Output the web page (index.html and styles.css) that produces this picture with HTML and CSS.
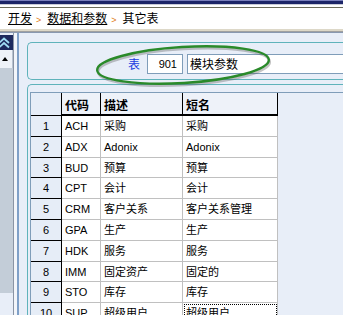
FILE: index.html
```html
<!DOCTYPE html>
<html lang="zh-CN">
<head>
  <meta charset="UTF-8">
  <title>其它表</title>
  <link rel="stylesheet" href="styles.css">
</head>
<body>
  <div class="titlebar"></div>
  <div class="crumbs">
    <a class="crumb">开发</a><span class="sep">&gt;</span><a class="crumb">数据和参数</a><span class="sep">&gt;</span><span class="here">其它表</span>
  </div>
  <div class="rule"></div>
  <div class="main">
    <div class="sidebar">
      <div class="nav-head">
        <svg width="13" height="15" viewBox="0 0 13 15">
          <path d="M-1 8 L4 3.5 L9 8" fill="none" stroke="#9fdcf4" stroke-width="1.8"/>
          <path d="M-1 12.5 L4 8 L9 12.5" fill="none" stroke="#9fdcf4" stroke-width="1.8"/>
        </svg>
      </div>
      <div class="scroll-up"><span class="tri"></span></div>
      <div class="track"></div>
    </div>
    <div class="splitter"></div>
    <div class="content">
      <div class="panel head-panel">
        <span class="lbl">表</span>
        <span class="field num">901</span>
        <span class="field desc">模块参数</span>
        <svg class="ring" width="230" height="54" viewBox="0 0 230 54">
          <ellipse cx="96" cy="30" rx="86" ry="18" transform="rotate(-3.5 96 30)" fill="none" stroke="rgba(90,90,90,0.35)" stroke-width="2.5"/>
          <ellipse cx="95" cy="28" rx="86" ry="18" transform="rotate(-3.5 95 28)" fill="none" stroke="#2a8a2a" stroke-width="2.4"/>
        </svg>
      </div>
      <div class="panel grid-panel">
        <div class="grid">
          <div class="hd rn"></div><div class="hd">代码</div><div class="hd">描述</div><div class="hd">短名</div>

          <div class="rn">1</div><div class="cell">ACH</div><div class="cell">采购</div><div class="cell">采购</div>
          <div class="rn">2</div><div class="cell">ADX</div><div class="cell">Adonix</div><div class="cell">Adonix</div>
          <div class="rn">3</div><div class="cell">BUD</div><div class="cell">预算</div><div class="cell">预算</div>
          <div class="rn">4</div><div class="cell">CPT</div><div class="cell">会计</div><div class="cell">会计</div>
          <div class="rn">5</div><div class="cell">CRM</div><div class="cell">客户关系</div><div class="cell">客户关系管理</div>
          <div class="rn">6</div><div class="cell">GPA</div><div class="cell">生产</div><div class="cell">生产</div>
          <div class="rn">7</div><div class="cell">HDK</div><div class="cell">服务</div><div class="cell">服务</div>
          <div class="rn">8</div><div class="cell">IMM</div><div class="cell">固定资产</div><div class="cell">固定的</div>
          <div class="rn">9</div><div class="cell">STO</div><div class="cell">库存</div><div class="cell">库存</div>
          <div class="rn">10</div><div class="cell">SUP</div><div class="cell">超级用户</div><div class="cell focus">超级用户</div>
        </div>
      </div>
    </div>
  </div>
</body>
</html>
```

FILE: styles.css
```css
body {
  margin: 0;
  width: 343px;
  height: 315px;
  overflow: hidden;
  background: #e8eef8;
  font-family: "Liberation Sans", "Noto Sans CJK SC", sans-serif;
  font-size: 11px;
  color: #000;
}
.titlebar {
  height: 4px;
  background: #1c2568;
  border-top: 1px solid #7a80bc;
  box-sizing: border-box;
}
.crumbs {
  height: 25px;
  box-sizing: border-box;
  background: #fff;
  border-top: 1px solid #c8ccd8;
  padding: 2px 0 0 8px;
  box-shadow: inset 0 2px 0 #fff, inset 0 3px 0 #6b6b5a;
  font-family: "Noto Sans CJK SC", sans-serif;
  font-size: 12px;
  line-height: 22px;
}
.crumb {
  text-decoration: underline;
  color: #000;
}
.sep {
  color: #e07a10;
  font-family: "Liberation Sans", sans-serif;
  font-size: 9px;
  margin: 0 6px 0 4px;
}
.rule {
  height: 4px;
  box-sizing: border-box;
  border-top: 2px solid #ddd8c8;
  border-bottom: 1px solid #8898b0;
  background: #a0a0a0;
}
.main {
  display: flex;
  height: 282px;
}
.sidebar {
  width: 14px;
  flex: none;
  display: flex;
  flex-direction: column;
  padding-top: 2px;
  border-right: 1px solid #8a94a4;
  box-sizing: border-box;
}
.nav-head {
  height: 15px;
  background: #1e2a5e;
  overflow: hidden;
}
.nav-head svg {
  display: block;
}
.scroll-up {
  height: 18px;
  background: #eef2f8;
  border-right: 1px solid #b8c2d0;
  display: flex;
  justify-content: center;
  align-items: center;
}
.tri {
  width: 0;
  height: 0;
  border-left: 3px solid transparent;
  border-right: 3px solid transparent;
  border-bottom: 4px solid #000;
  margin-left: -2px;
}
.track {
  height: 225px;
  background: #c3cdd8;
}
.splitter {
  width: 3px;
  flex: none;
  background: #f2f5fa;
}
.content {
  flex: 1;
  border-left: 2px solid #7fa0c8;
  padding: 9px 0 0 8px;
  min-width: 0;
}
.panel {
  border: 1px solid #5fb3bb;
  border-right: none;
  border-radius: 5px 0 0 5px;
  margin-right: -20px;
}
.head-panel {
  position: relative;
  height: 38px;
  box-sizing: border-box;
  display: flex;
  align-items: flex-start;
  padding: 11px 0 0 100px;
  font-family: "Noto Sans CJK SC", sans-serif;
  font-size: 12px;
}
.lbl {
  color: #1a3ce0;
  line-height: 20px;
  margin-right: 7px;
}
.field {
  height: 20px;
  box-sizing: border-box;
  border: 1px solid #7f9db9;
  background: #fff;
  line-height: 18px;
}
.num {
  width: 40px;
  text-align: right;
  padding-right: 5px;
  margin-right: 4px;
  font-family: "Liberation Sans", sans-serif;
  font-size: 11px;
}
.desc {
  width: 200px;
  padding-left: 2px;
}
.ring {
  position: absolute;
  left: 60px;
  top: -6px;
}
.grid-panel {
  margin-top: 4px;
  padding: 7px 0 0 2px;
  border-bottom: none;
  border-radius: 5px 0 0 0;
  height: 300px;
}
.grid {
  display: grid;
  grid-template-columns: 31px 39px 82px 95px;
  grid-auto-rows: 20.8px;
  grid-template-rows: 23px;
  border-top: 1px solid #7f9db9;
  border-left: 1px solid #7f9db9;
}
.grid > div {
  box-sizing: border-box;
  border-right: 1px solid #c0c0c0;
  border-bottom: 1px solid #c0c0c0;
  padding-left: 3px;
  line-height: 20px;
  white-space: nowrap;
  overflow: hidden;
}
.grid .hd {
  background: #eef2f9;
  border-right: 1px solid #000;
  border-bottom: 2px solid #000;
  font-family: "Noto Sans CJK SC", sans-serif;
  font-size: 12px;
  font-weight: bold;
  line-height: 21px;
  padding-top: 1px;
}
.grid .rn {
  background: #e6edf7;
  border-right: 1px solid #000;
  border-bottom: 1px solid #000;
  text-align: center;
  padding-left: 0;
}
.cell {
  background: #fff;
}
.focus {
  outline: 1px dotted #000;
  outline-offset: -2px;
}
```
